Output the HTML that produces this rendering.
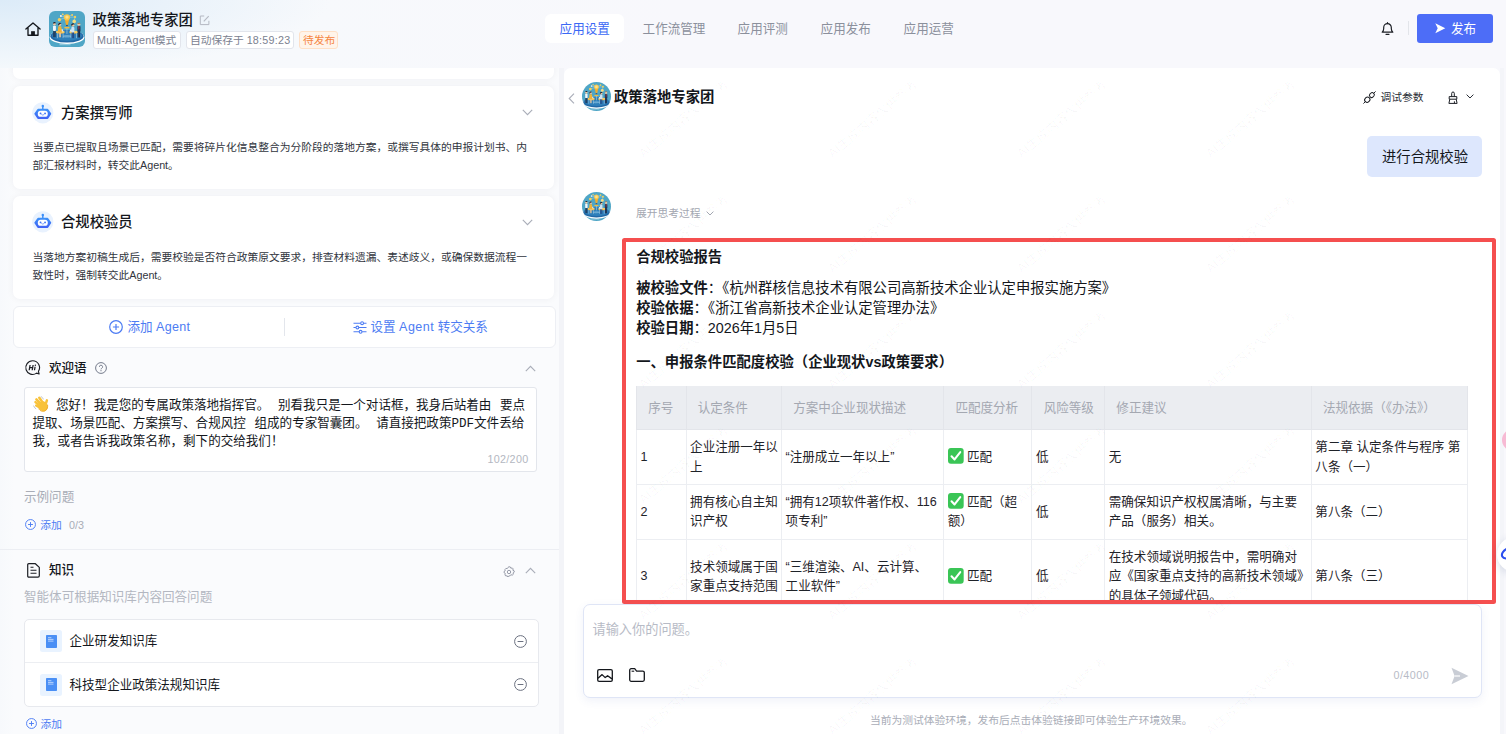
<!DOCTYPE html>
<html lang="zh-CN">
<head>
<meta charset="utf-8">
<title>政策落地专家团</title>
<style>
*{box-sizing:border-box;margin:0;padding:0}
html,body{width:1506px;height:734px;overflow:hidden}
body{position:relative;background:#f7f8fc;font-family:"Liberation Sans","Noto Sans CJK SC",sans-serif;color:#1f2329;-webkit-font-smoothing:antialiased}
.abs{position:absolute}
.t{position:absolute;white-space:nowrap;line-height:20px}
.f10{font-size:10.76px}
.f12{font-size:12.55px}
.f14{font-size:14.34px}
.b{font-weight:700}
.m{font-weight:500}
.gray{color:#a9adb7}
.blue{color:#4d7cf3}
svg{position:absolute;overflow:visible}
#bg{left:0;top:0;width:1506px;height:734px;background:
 radial-gradient(ellipse 330px 72px at 0 0,#dcebf8 0%,rgba(220,235,248,0) 100%),
 linear-gradient(90deg,#f5f9fc 0,#f7f9fc 20%,#f8f8fc 45%,#f8f8fc 100%)}
#lbg{left:0;top:68px;width:564px;height:666px;background:linear-gradient(90deg,#f7f9fc 0,#fafbfd 14px,#fafbfd 100%)}
.card{position:absolute;left:13px;width:541px;background:#fff;border-radius:7px;box-shadow:0 0 7px rgba(20,30,60,.055)}
.tag{position:absolute;top:30.5px;height:18px;line-height:16.5px;font-size:10.76px;border:1px solid #e2e5ec;border-radius:3px;background:#fff;color:#7b8190;padding:0 3.4px;white-space:nowrap}
.tab{position:absolute;top:15px;height:29px;line-height:29px;font-size:12.55px;color:#8b909c;white-space:nowrap}
#right{left:564px;top:68px;width:936px;height:666px;background:#fff;border-radius:7px 7px 0 0;overflow:hidden}
.wm{position:absolute;white-space:nowrap;font-size:12.55px;color:rgba(20,20,40,.036);transform:translate(-50%,-50%) rotate(-40deg);line-height:16px}
table{border-collapse:collapse;table-layout:fixed;position:absolute;left:72px;top:318.5px;width:832px;font-size:12.55px;line-height:19.7px;color:#1f2329}
th{background:#ebedf1;color:#a4a8b1;font-weight:400;text-align:left;height:43.5px;padding:2.4px 0 0 11.2px;border:1px solid #e3e5ea;border-top:none}
td{padding:7.9px 3px 6.6px 3.6px;border:1px solid #eceef2;vertical-align:middle}
</style>
</head>
<body>
<div id="bg" class="abs"></div>
<div id="lbg" class="abs"></div>

<!-- ===== HEADER ===== -->
<div id="header">
<!-- home -->
<svg style="left:25px;top:22.300px" width="16" height="14" viewBox="0 0 16 14"><path d="M.9 7 8 .9 15.100 7M3 5.600v7.600h10V5.600" fill="none" stroke="#15181d" stroke-width="1.350" stroke-linejoin="round" stroke-linecap="round"/><rect x="6.100" y="9.200" width="3.800" height="4" fill="#15181d"/></svg>
<!-- app icon -->
<svg style="left:49px;top:11px" width="36" height="36" viewBox="0 0 36 36">
<defs><clipPath id="ac"><rect width="36" height="36" rx="6"/></clipPath></defs>
<g clip-path="url(#ac)">
<rect width="36" height="36" fill="#4fa6c6"/>
<ellipse cx="18" cy="26.200" rx="17.300" ry="6.900" fill="#fff"/>
<ellipse cx="18" cy="25.300" rx="16.600" ry="6.300" fill="#2268a6"/>
<ellipse cx="18" cy="24.600" rx="15" ry="5.200" fill="#2e7fba"/>
<ellipse cx="18" cy="25.200" rx="4" ry="1.300" fill="#8fc4e2" opacity=".6"/>
<path d="M10.500 33.700h11" stroke="#cfe6f1" stroke-width=".6"/>
<g stroke="#e6f2f8" stroke-width=".35" fill="none"><path d="M17.900 6.300 10.400 8.700M17.900 6.300 11.900 5.100M17.900 6.300 13.700 3.300M17.900 6.300 23.100 3.900M17.900 6.300 26 6M26 6 25.200 10.400"/></g>
<circle cx="10.400" cy="8.700" r="1.700" fill="#f6cf5a"/><circle cx="11.900" cy="5.100" r="1" fill="#eef5f9"/><circle cx="13.700" cy="3.300" r=".9" fill="#f6cf5a"/><circle cx="23.100" cy="3.900" r="1" fill="#f6cf5a"/><circle cx="26" cy="6" r="1.200" fill="#f6cf5a"/><circle cx="25.200" cy="10.400" r="1.800" fill="#f8dc7e"/>
<path d="M15.800 8.300 17 13.900h1.900L20.100 8.300z" fill="#f2ab2d"/>
<circle cx="17.950" cy="6.300" r="3.100" fill="#f9c748"/><circle cx="17.950" cy="6.100" r="1.700" fill="#fde08a"/>
<rect x="17" y="13.900" width="1.900" height="1.300" fill="#2a4f7c"/>
<ellipse cx="17.950" cy="16.700" rx="2.800" ry=".85" fill="#f3b93c"/>
<rect x="17.600" y="17.300" width=".7" height="5.500" fill="#a9cfe4"/>
<!-- tables -->
<g fill="#cfe3ee"><rect x="8.300" y="21.500" width=".5" height="5.600"/><rect x="13.800" y="21.500" width=".5" height="5.600"/><rect x="21.700" y="21.500" width=".5" height="5.600"/><rect x="27.200" y="21.500" width=".5" height="5.600"/></g>
<ellipse cx="11.300" cy="21.300" rx="4.300" ry="1.350" fill="#efb23c"/><ellipse cx="11.300" cy="20.900" rx="4.300" ry="1.200" fill="#f8cd62"/>
<ellipse cx="24.700" cy="21.300" rx="4.300" ry="1.350" fill="#efb23c"/><ellipse cx="24.700" cy="20.900" rx="4.300" ry="1.200" fill="#f8cd62"/>
<path d="M10.600 18.300h3.200l.5 2.200h-3.200z" fill="#dfe9f6"/><path d="M21.200 18.500h3.200l-.4 2.100h-3.200z" fill="#dfe9f6"/>
<!-- people -->
<rect x="4.300" y="19.500" width="1.100" height="6.700" fill="#1c2b47"/><rect x="5.500" y="19.500" width="1.100" height="6.700" fill="#1c2b47"/>
<rect x="4" y="14.700" width="2.900" height="5.300" rx=".9" fill="#f3f6fa"/><circle cx="5.400" cy="13" r="1.450" fill="#f0c9a6"/><path d="M3.900 12.700a1.500 1.500 0 0 1 3-.300l-.6-.1-2 .2z" fill="#1a2233"/>
<rect x="9.900" y="20.500" width=".9" height="5.800" fill="#e9c39c"/><rect x="11" y="20.500" width=".9" height="5.800" fill="#e9c39c"/>
<path d="M9.300 15.300h3l.7 6.200H8.700z" fill="#f0b23a"/><circle cx="10.800" cy="13.500" r="1.450" fill="#f0c9a6"/><path d="M9.200 14.200a1.650 1.650 0 0 1 3.200-1.300l-1.400-.2-1 1.500z" fill="#1a2233"/>
<rect x="22.700" y="21" width="1.100" height="6.200" fill="#244a86"/><rect x="24" y="21" width="1.100" height="6.200" fill="#244a86"/>
<rect x="22.300" y="16" width="3.100" height="5.400" rx=".9" fill="#cfe2f4"/><circle cx="23.900" cy="14.300" r="1.450" fill="#f0c9a6"/><path d="M22.300 14.700a1.650 1.650 0 0 1 3.200-1.200l-1.600.1-.9 1.100z" fill="#1a2233"/>
<rect x="28.700" y="20" width="1.100" height="6.500" fill="#1c2b47"/><rect x="30" y="20" width="1.100" height="6.500" fill="#1c2b47"/>
<rect x="28.300" y="14.900" width="3.200" height="5.700" rx=".9" fill="#22345a"/><path d="M29.500 15h.8l-.1 3.200-.3.400-.3-.4z" fill="#d8463a"/><circle cx="29.900" cy="13.200" r="1.450" fill="#f0c9a6"/><path d="M28.400 13a1.550 1.550 0 0 1 3-.300l-1-.2-1.600.2z" fill="#7a4a2a"/>
</g></svg>
<div class="t m" style="left:92.5px;top:9.5px;font-size:14.34px;line-height:20px;color:#14171c">政策落地专家团</div>
<!-- edit icon -->
<svg style="left:199px;top:14.5px" width="11" height="11" viewBox="0 0 11 11"><path d="M5.2 1H1.3v8.6h8.6V5.8" fill="none" stroke="#b4b8c2" stroke-width="1"/><path d="M4.8 6.3 9.7 1.2" fill="none" stroke="#b4b8c2" stroke-width="1.1"/></svg>
<div class="tag" style="left:92.5px;width:88px"><span style="letter-spacing:.32px">Multi-Agent</span>模式</div>
<div class="tag" style="left:185.5px;width:108.5px">自动保存于 <span style="letter-spacing:.25px">18:59:23</span></div>
<div class="tag" style="left:298.5px;width:39.5px;color:#f5853f;background:#fff4ea;border-color:#ffe0c6">待发布</div>
<!-- tabs -->
<div class="abs" style="left:545px;top:14px;width:79px;height:29px;background:#fff;border-radius:6px"></div>
<div class="tab" style="left:559.6px;color:#3b68f5">应用设置</div>
<div class="tab" style="left:642.6px">工作流管理</div>
<div class="tab" style="left:737.6px">应用评测</div>
<div class="tab" style="left:820.6px">应用发布</div>
<div class="tab" style="left:903.6px">应用运营</div>
<!-- bell -->
<svg style="left:1381px;top:21.5px" width="13" height="14" viewBox="0 0 13 14"><path d="M1.2 10.2h10.6c-1.1-.9-1.5-1.9-1.5-3.6V5.4a3.8 3.8 0 0 0-7.6 0v1.2c0 1.700-.4 2.7-1.500 3.600z" fill="none" stroke="#1c1f25" stroke-width="1.2" stroke-linejoin="round"/><path d="M5 12.300h3M6.500 .6v1" stroke="#1c1f25" stroke-width="1.2" stroke-linecap="round"/></svg>
<div class="abs" style="left:1408px;top:21px;width:1px;height:14px;background:#e3e5ea"></div>
<!-- publish -->
<div class="abs" style="left:1417px;top:14px;width:76px;height:29px;background:#4d6df7;border-radius:3px"></div>
<svg style="left:1435px;top:23.2px" width="10.5" height="10.5" viewBox="0 0 10.5 10.5"><path d="M.3.2 10.300 5.250.3 10.300 2.700 5.250z" fill="#fff"/></svg>
<div class="t f12" style="left:1451px;top:18.5px;color:#fff;line-height:20px">发布</div>
</div>

<!-- ===== LEFT PANEL ===== -->
<div id="left" class="abs" style="left:0;top:0;width:564px;height:734px;clip-path:inset(68px 0 0 0)">
<div class="abs" style="left:558.500px;top:68px;width:5.500px;height:666px;background:#f3f4f8"></div>
<div class="card" style="top:40px;height:39px"></div>
<!-- card 2 -->
<div class="card" style="top:86px;height:103px"></div>
<svg style="left:32.2px;top:101.8px" width="21.600" height="21.600" viewBox="0 0 22 22"><circle cx="11" cy="11" r="10.800" fill="#e9f2fe"/><defs><linearGradient id="rg" x1="0" y1="0" x2="0" y2="1"><stop offset="0" stop-color="#3c8ff8"/><stop offset="1" stop-color="#4064f5"/></linearGradient></defs><path d="M11 4.200v3" stroke="#3c8ff8" stroke-width="1.500" stroke-linecap="round"/><circle cx="11" cy="4" r="1.250" fill="#3c8ff8"/><path d="M3.300 11.900 6.200 7.900h9.600l2.900 4-2.900 4.400H6.200z" fill="url(#rg)" stroke="url(#rg)" stroke-width="1.800" stroke-linejoin="round"/><rect x="5.900" y="9" width="10.200" height="6.100" rx="3" fill="#fff"/><circle cx="8.700" cy="11.600" r=".95" fill="#3f74f6"/><circle cx="13.300" cy="11.600" r=".95" fill="#3f74f6"/><path d="M9.900 13q1.100.9 2.200 0" fill="none" stroke="#3f74f6" stroke-width=".7" stroke-linecap="round"/></svg>
<div class="t m f14" style="left:61px;top:103px;color:#14171c">方案撰写师</div>
<svg style="left:522px;top:109px" width="11" height="7" viewBox="0 0 11 7"><path d="M.8.900 5.500 5.700 10.200.9" fill="none" stroke="#a9adb8" stroke-width="1.100"/></svg>
<div class="t f10" style="left:32.500px;top:138px;line-height:18px;color:#31353d;white-space:normal;width:500px">当要点已提取且场景已匹配，需要将碎片化信息整合为分阶段的落地方案，或撰写具体的申报计划书、内部汇报材料时，转交此Agent。</div>
<!-- card 3 -->
<div class="card" style="top:195.500px;height:103.500px"></div>
<svg style="left:32.2px;top:211.3px" width="21.600" height="21.600" viewBox="0 0 22 22"><circle cx="11" cy="11" r="10.800" fill="#e9f2fe"/><defs><linearGradient id="rg" x1="0" y1="0" x2="0" y2="1"><stop offset="0" stop-color="#3c8ff8"/><stop offset="1" stop-color="#4064f5"/></linearGradient></defs><path d="M11 4.200v3" stroke="#3c8ff8" stroke-width="1.500" stroke-linecap="round"/><circle cx="11" cy="4" r="1.250" fill="#3c8ff8"/><path d="M3.300 11.900 6.200 7.900h9.600l2.900 4-2.900 4.400H6.200z" fill="url(#rg)" stroke="url(#rg)" stroke-width="1.800" stroke-linejoin="round"/><rect x="5.900" y="9" width="10.200" height="6.100" rx="3" fill="#fff"/><circle cx="8.700" cy="11.600" r=".95" fill="#3f74f6"/><circle cx="13.300" cy="11.600" r=".95" fill="#3f74f6"/><path d="M9.900 13q1.100.9 2.200 0" fill="none" stroke="#3f74f6" stroke-width=".7" stroke-linecap="round"/></svg>
<div class="t m f14" style="left:61px;top:212px;color:#14171c">合规校验员</div>
<svg style="left:522px;top:218.5px" width="11" height="7" viewBox="0 0 11 7"><path d="M.8.900 5.500 5.700 10.200.9" fill="none" stroke="#a9adb8" stroke-width="1.100"/></svg>
<div class="t f10" style="left:32.500px;top:248px;line-height:18px;color:#31353d;white-space:normal;width:500px">当落地方案初稿生成后，需要校验是否符合政策原文要求，排查材料遗漏、表述歧义，或确保数据流程一致性时，强制转交此Agent。</div>
<!-- button row -->
<div class="abs" style="left:13px;top:306px;width:542.500px;height:41.500px;background:#fff;border:1px solid #edeff4;border-radius:6px"></div>
<svg style="left:109px;top:320px" width="14" height="14" viewBox="0 0 14 14"><circle cx="7" cy="7" r="6.300" fill="none" stroke="#4d7cf3" stroke-width="1.200"/><path d="M7 3.900v6.200M3.900 7h6.200" stroke="#4d7cf3" stroke-width="1.200"/></svg>
<div class="t f12 blue" style="left:127.500px;top:317px">添加 <span style="letter-spacing:.3px">Agent</span></div>
<div class="abs" style="left:284px;top:318px;width:1px;height:18px;background:#e3e6ec"></div>
<svg style="left:352.500px;top:320.500px" width="14" height="13" viewBox="0 0 14 13"><path d="M.5 2.200h7.200M10.600 2.200h2.900M.5 6.500h2.400M5.800 6.500h7.700M.5 10.800h5.700M9.100 10.800h4.400" stroke="#4d7cf3" stroke-width="1.100"/><circle cx="9.100" cy="2.200" r="1.400" fill="none" stroke="#4d7cf3" stroke-width="1.100"/><circle cx="4.400" cy="6.500" r="1.400" fill="none" stroke="#4d7cf3" stroke-width="1.100"/><circle cx="7.600" cy="10.800" r="1.400" fill="none" stroke="#4d7cf3" stroke-width="1.100"/></svg>
<div class="t f12 blue" style="left:370.500px;top:317px">设置 <span style="letter-spacing:.45px">Agent</span> 转交关系</div>
<!-- welcome -->
<svg style="left:25.400px;top:360.200px" width="15.200" height="15.200" viewBox="0 0 14 14"><path d="M7 .7a6.300 6.300 0 1 0 3.700 11.400l2.300.8-.6-2.500A6.300 6.300 0 0 0 7 .7z" fill="none" stroke="#1c1f25" stroke-width="1.050" stroke-linejoin="round"/><g transform="skewX(-10) translate(1.300 0)"><path d="M4.200 4.600v4.800M7 4.600v4.800M4.200 7h2.800M9.100 6.300v3.100" stroke="#1c1f25" stroke-width="1.150"/><circle cx="9.100" cy="4.900" r=".65" fill="#1c1f25"/></g></svg>
<div class="t m f12" style="left:49px;top:357.500px;color:#14171c">欢迎语</div>
<svg style="left:94.500px;top:362px" width="12" height="12" viewBox="0 0 12 12"><circle cx="6" cy="6" r="5.400" fill="none" stroke="#757b8c" stroke-width="1"/><path d="M4.400 4.800a1.600 1.600 0 1 1 2.300 1.450c-.5.300-.7.550-.7 1.100" fill="none" stroke="#757b8c" stroke-width="1"/><circle cx="6" cy="8.700" r=".6" fill="#757b8c"/></svg>
<svg style="left:524.5px;top:364.5px" width="11" height="7" viewBox="0 0 11 7"><path d="M.8 6.100 5.500 1.300 10.200 6.100" fill="none" stroke="#a9adb8" stroke-width="1.100"/></svg>
<div class="abs" style="left:24px;top:387px;width:513px;height:84.500px;background:#fff;border:1px solid #e3e6ec;border-radius:3px"></div>
<svg aria-label="👋" style="left:32.500px;top:396px" width="16" height="16" viewBox="0 0 16 16"><g stroke="#f8c23a" stroke-width="2.500" stroke-linecap="round" fill="none"><path d="M6.300 1.700 10 7"/><path d="M3.400 3.300 8.500 8.600"/><path d="M2.500 6.100 7.600 10.300"/><path d="M3.200 9.500 7 11.800"/><path d="M13.900 4.400 12.500 8.600"/></g><ellipse cx="10" cy="10.300" rx="4.700" ry="5.200" transform="rotate(-38 10 10.300)" fill="#f8c23a"/><path d="M5.800 12.700c1.300 2.500 4.200 3.400 6.400 2 2-1.300 2.700-3.600 2.400-6" fill="none" stroke="#eea928" stroke-width=".9"/><path d="M8.200.700c1 .4 1.700 1.300 2 2.300M.7 10c.4 1.200 1.100 2.100 2.100 2.700" fill="none" stroke="#b5bac4" stroke-width=".9" stroke-linecap="round"/></svg>
<div class="t f12" style="left:32.500px;top:397.700px;width:500px;line-height:17.930px;word-spacing:1.2px;white-space:pre-wrap;color:#14171c;font-family:'Liberation Mono','Noto Sans CJK SC',monospace"><span style="display:inline-block;width:23.500px"></span>您好！我是您的专属政策落地指挥官。 别看我只是一个对话框，我身后站着由 要点
提取、场景匹配、方案撰写、合规风控 组成的专家智囊团。 请直接把政策PDF文件丢给
我，或者告诉我政策名称，剩下的交给我们！</div>
<div class="t f10" style="left:487.500px;top:448.500px;color:#b3b7c1;letter-spacing:.3px">102/200</div>
<div class="t f12" style="left:24px;top:486.500px;color:#a9adb7">示例问题</div>
<svg style="left:24.8px;top:519px" width="11" height="11" viewBox="0 0 14 14"><circle cx="7" cy="7" r="6.300" fill="none" stroke="#4d7cf3" stroke-width="1.200"/><path d="M7 3.900v6.200M3.900 7h6.200" stroke="#4d7cf3" stroke-width="1.200"/></svg>
<div class="t f10 blue" style="left:40.200px;top:514.500px">添加</div>
<div class="t f10" style="left:69px;top:514.500px;color:#a9adb7">0/3</div>
<div class="abs" style="left:0;top:548.500px;width:559px;height:1px;background:#eceef3"></div>
<!-- knowledge -->
<svg style="left:26.500px;top:563px" width="13" height="15" viewBox="0 0 13 15"><path d="M1.700.7h6.700l3.900 3.700v8.400a1.300 1.300 0 0 1-1.300 1.300H1.700A1 1 0 0 1 .7 13V1.700a1 1 0 0 1 1-1z" fill="none" stroke="#1c1f25" stroke-width="1.200" stroke-linejoin="round"/><path d="M3.500 4.300h3M3.500 7.300h6M3.500 10.300h6" stroke="#1c1f25" stroke-width="1.100"/></svg>
<div class="t m f12" style="left:49px;top:559.500px;color:#14171c">知识</div>
<svg style="left:502.500px;top:565.500px" width="12" height="12" viewBox="0 0 12 12"><path d="M6 .7 7.400 1l.5 1.300 1.300-.4 1 1-.4 1.300 1.300.6.200 1.300-1.200.8.200 1.400-1.100.9-1.300-.5-.8 1.100-1.400.2L4.900 11l-.7-1.200-1.400.2-.9-1.100.5-1.300L1.200 6.900 1 5.500l1.200-.7L2 3.400l.9-1 1.400.2L5 1.400z" fill="none" stroke="#8d92a0" stroke-width=".9" stroke-linejoin="round"/><circle cx="6" cy="6" r="1.700" fill="none" stroke="#8d92a0" stroke-width=".9"/></svg>
<svg style="left:524.8px;top:567px" width="11" height="7" viewBox="0 0 11 7"><path d="M.8 6.100 5.500 1.300 10.200 6.100" fill="none" stroke="#a9adb8" stroke-width="1.100"/></svg>
<div class="t f12" style="left:24px;top:586.500px;color:#b3b7c1">智能体可根据知识库内容回答问题</div>
<div class="abs" style="left:24px;top:619px;width:514.500px;height:87.500px;background:#fff;border:1px solid #e7e9ee;border-radius:5px"></div>
<div class="abs" style="left:25px;top:662px;width:512.500px;height:1px;background:#eceef2"></div>
<div class="abs" style="left:39.800px;top:630px;width:22px;height:22px;background:#e9f3ff;border-radius:2.500px"></div><svg style="left:45.500px;top:634.8px" width="11" height="13" viewBox="0 0 11 13"><path d="M0 .8a.8.800 0 0 1 .8-.8h9.400a.8.800 0 0 1 .8.800v11.400a.8.800 0 0 1-.8.800H.8a.8.800 0 0 1-.8-.8z" fill="#4a8ff5"/><path d="M2 2.700h3.400M2 4.400h5.500M2 6.100h5.500" stroke="#e3eeff" stroke-width=".7"/></svg>
<div class="t f12" style="left:69.500px;top:630.500px;color:#14171c">企业研发知识库</div>
<svg style="left:513.7px;top:634.7px" width="13" height="13" viewBox="0 0 13 13"><circle cx="6.500" cy="6.500" r="5.900" fill="none" stroke="#6b7180" stroke-width="1"/><path d="M3.600 6.500h5.800" stroke="#6b7180" stroke-width="1"/></svg>
<div class="abs" style="left:39.800px;top:673.5px;width:22px;height:22px;background:#e9f3ff;border-radius:2.500px"></div><svg style="left:45.500px;top:678.3px" width="11" height="13" viewBox="0 0 11 13"><path d="M0 .8a.8.800 0 0 1 .8-.8h9.400a.8.800 0 0 1 .8.800v11.400a.8.800 0 0 1-.8.800H.8a.8.800 0 0 1-.8-.8z" fill="#4a8ff5"/><path d="M2 2.700h3.400M2 4.400h5.500M2 6.100h5.500" stroke="#e3eeff" stroke-width=".7"/></svg>
<div class="t f12" style="left:69.500px;top:674.500px;color:#14171c">科技型企业政策法规知识库</div>
<svg style="left:513.7px;top:677.8px" width="13" height="13" viewBox="0 0 13 13"><circle cx="6.500" cy="6.500" r="5.900" fill="none" stroke="#6b7180" stroke-width="1"/><path d="M3.600 6.500h5.800" stroke="#6b7180" stroke-width="1"/></svg>
<svg style="left:25.8px;top:717.8px" width="11" height="11" viewBox="0 0 14 14"><circle cx="7" cy="7" r="6.300" fill="none" stroke="#4d7cf3" stroke-width="1.200"/><path d="M7 3.900v6.200M3.900 7h6.200" stroke="#4d7cf3" stroke-width="1.200"/></svg>
<div class="t f10 blue" style="left:40.600px;top:713.500px">添加</div>
</div>

<!-- ===== RIGHT PANEL ===== -->
<div id="right" class="abs"></div>
<div id="rc" class="abs" style="left:0;top:0;width:1506px;height:734px;clip-path:inset(68px 6px 0 564px)">
<!-- chat header -->
<svg style="left:568px;top:92.500px" width="7" height="11" viewBox="0 0 7 11"><path d="M6 .7 1.200 5.500 6 10.300" fill="none" stroke="#a9adb8" stroke-width="1.100"/></svg>
<svg style="left:581.8px;top:82px" width="29" height="29" viewBox="0 0 36 36"><defs><clipPath id="av1"><circle cx="18" cy="18" r="18"/></clipPath></defs><g clip-path="url(#av1)"><rect width="36" height="36" fill="#4fa6c6"/><ellipse cx="18" cy="26.200" rx="17.300" ry="6.900" fill="#fff"/><ellipse cx="18" cy="25.300" rx="16.600" ry="6.300" fill="#2268a6"/><ellipse cx="18" cy="24.600" rx="15" ry="5.200" fill="#2e7fba"/><ellipse cx="18" cy="25.200" rx="4" ry="1.300" fill="#8fc4e2" opacity=".6"/><path d="M10.500 33.700h11" stroke="#cfe6f1" stroke-width=".6"/><g stroke="#e6f2f8" stroke-width=".35" fill="none"><path d="M17.900 6.300 10.400 8.700M17.900 6.300 11.900 5.100M17.900 6.300 13.700 3.300M17.900 6.300 23.100 3.900M17.900 6.300 26 6M26 6 25.200 10.400"/></g><circle cx="10.400" cy="8.700" r="1.700" fill="#f6cf5a"/><circle cx="11.900" cy="5.100" r="1" fill="#eef5f9"/><circle cx="13.700" cy="3.300" r=".9" fill="#f6cf5a"/><circle cx="23.100" cy="3.900" r="1" fill="#f6cf5a"/><circle cx="26" cy="6" r="1.200" fill="#f6cf5a"/><circle cx="25.200" cy="10.400" r="1.800" fill="#f8dc7e"/><path d="M15.800 8.300 17 13.900h1.900L20.100 8.300z" fill="#f2ab2d"/><circle cx="17.950" cy="6.300" r="3.100" fill="#f9c748"/><circle cx="17.950" cy="6.100" r="1.700" fill="#fde08a"/><rect x="17" y="13.900" width="1.900" height="1.300" fill="#2a4f7c"/><ellipse cx="17.950" cy="16.700" rx="2.800" ry=".85" fill="#f3b93c"/><rect x="17.600" y="17.300" width=".7" height="5.500" fill="#a9cfe4"/><!-- tables --><g fill="#cfe3ee"><rect x="8.300" y="21.500" width=".5" height="5.600"/><rect x="13.800" y="21.500" width=".5" height="5.600"/><rect x="21.700" y="21.500" width=".5" height="5.600"/><rect x="27.200" y="21.500" width=".5" height="5.600"/></g><ellipse cx="11.300" cy="21.300" rx="4.300" ry="1.350" fill="#efb23c"/><ellipse cx="11.300" cy="20.900" rx="4.300" ry="1.200" fill="#f8cd62"/><ellipse cx="24.700" cy="21.300" rx="4.300" ry="1.350" fill="#efb23c"/><ellipse cx="24.700" cy="20.900" rx="4.300" ry="1.200" fill="#f8cd62"/><path d="M10.600 18.300h3.200l.5 2.200h-3.200z" fill="#dfe9f6"/><path d="M21.200 18.500h3.200l-.4 2.100h-3.200z" fill="#dfe9f6"/><!-- people --><rect x="4.300" y="19.500" width="1.100" height="6.700" fill="#1c2b47"/><rect x="5.500" y="19.500" width="1.100" height="6.700" fill="#1c2b47"/><rect x="4" y="14.700" width="2.900" height="5.300" rx=".9" fill="#f3f6fa"/><circle cx="5.400" cy="13" r="1.450" fill="#f0c9a6"/><path d="M3.900 12.700a1.500 1.500 0 0 1 3-.300l-.6-.1-2 .2z" fill="#1a2233"/><rect x="9.900" y="20.500" width=".9" height="5.800" fill="#e9c39c"/><rect x="11" y="20.500" width=".9" height="5.800" fill="#e9c39c"/><path d="M9.300 15.300h3l.7 6.200H8.700z" fill="#f0b23a"/><circle cx="10.800" cy="13.500" r="1.450" fill="#f0c9a6"/><path d="M9.200 14.200a1.650 1.650 0 0 1 3.200-1.300l-1.400-.2-1 1.500z" fill="#1a2233"/><rect x="22.700" y="21" width="1.100" height="6.200" fill="#244a86"/><rect x="24" y="21" width="1.100" height="6.200" fill="#244a86"/><rect x="22.300" y="16" width="3.100" height="5.400" rx=".9" fill="#cfe2f4"/><circle cx="23.900" cy="14.300" r="1.450" fill="#f0c9a6"/><path d="M22.300 14.700a1.650 1.650 0 0 1 3.200-1.200l-1.600.1-.9 1.100z" fill="#1a2233"/><rect x="28.700" y="20" width="1.100" height="6.500" fill="#1c2b47"/><rect x="30" y="20" width="1.100" height="6.500" fill="#1c2b47"/><rect x="28.300" y="14.900" width="3.200" height="5.700" rx=".9" fill="#22345a"/><path d="M29.500 15h.8l-.1 3.200-.3.400-.3-.4z" fill="#d8463a"/><circle cx="29.900" cy="13.200" r="1.450" fill="#f0c9a6"/><path d="M28.400 13a1.550 1.550 0 0 1 3-.300l-1-.2-1.600.2z" fill="#7a4a2a"/></g></svg>
<div class="t b f14" style="left:614px;top:87px;color:#14171c">政策落地专家团</div>
<svg style="left:1363px;top:91px" width="13" height="13" viewBox="0 0 13 13"><path d="M.7 12.300 2.400 10.600M10.700 2.300 12.300.7" stroke="#1c1f25" stroke-width="1" stroke-linecap="round"/><rect x="-2.400" y="-2.700" width="4.800" height="5.400" rx="2.300" transform="translate(4.300 8.700) rotate(45)" fill="none" stroke="#1c1f25" stroke-width="1"/><rect x="-2.100" y="-2.500" width="4.200" height="5" rx="2" transform="translate(8.900 4.100) rotate(45)" fill="none" stroke="#1c1f25" stroke-width="1"/></svg>
<div class="t f10" style="left:1380.500px;top:87px;color:#2a2e36">调试参数</div>
<svg style="left:1448px;top:91.500px" width="10" height="12" viewBox="0 0 10 12"><path d="M3.700 4.600V1.300a1.300 1.300 0 0 1 2.600 0v3.300M1.200 4.600h7.600v2.600H1.200zM1.800 7.200.9 11.400h8.200l-.9-4.200M6.400 11.400V9.300" fill="none" stroke="#1c1f25" stroke-width="1" stroke-linejoin="round"/></svg>
<svg style="left:1465.500px;top:94px" width="8" height="5" viewBox="0 0 8 5"><path d="M.6.600 4 4 7.400.6" fill="none" stroke="#2a2e36" stroke-width="1"/></svg>
<!-- user bubble -->
<div class="abs" style="left:1367px;top:136px;width:115px;height:41px;background:#dde7fd;border-radius:5px"></div>
<div class="t f14" style="left:1382px;top:147px;color:#14171c">进行合规校验</div>
<!-- bot -->
<svg style="left:581.8px;top:191.5px" width="29" height="29" viewBox="0 0 36 36"><defs><clipPath id="av2"><circle cx="18" cy="18" r="18"/></clipPath></defs><g clip-path="url(#av2)"><rect width="36" height="36" fill="#4fa6c6"/><ellipse cx="18" cy="26.200" rx="17.300" ry="6.900" fill="#fff"/><ellipse cx="18" cy="25.300" rx="16.600" ry="6.300" fill="#2268a6"/><ellipse cx="18" cy="24.600" rx="15" ry="5.200" fill="#2e7fba"/><ellipse cx="18" cy="25.200" rx="4" ry="1.300" fill="#8fc4e2" opacity=".6"/><path d="M10.500 33.700h11" stroke="#cfe6f1" stroke-width=".6"/><g stroke="#e6f2f8" stroke-width=".35" fill="none"><path d="M17.900 6.300 10.400 8.700M17.900 6.300 11.900 5.100M17.900 6.300 13.700 3.300M17.900 6.300 23.100 3.900M17.900 6.300 26 6M26 6 25.200 10.400"/></g><circle cx="10.400" cy="8.700" r="1.700" fill="#f6cf5a"/><circle cx="11.900" cy="5.100" r="1" fill="#eef5f9"/><circle cx="13.700" cy="3.300" r=".9" fill="#f6cf5a"/><circle cx="23.100" cy="3.900" r="1" fill="#f6cf5a"/><circle cx="26" cy="6" r="1.200" fill="#f6cf5a"/><circle cx="25.200" cy="10.400" r="1.800" fill="#f8dc7e"/><path d="M15.800 8.300 17 13.900h1.900L20.100 8.300z" fill="#f2ab2d"/><circle cx="17.950" cy="6.300" r="3.100" fill="#f9c748"/><circle cx="17.950" cy="6.100" r="1.700" fill="#fde08a"/><rect x="17" y="13.900" width="1.900" height="1.300" fill="#2a4f7c"/><ellipse cx="17.950" cy="16.700" rx="2.800" ry=".85" fill="#f3b93c"/><rect x="17.600" y="17.300" width=".7" height="5.500" fill="#a9cfe4"/><!-- tables --><g fill="#cfe3ee"><rect x="8.300" y="21.500" width=".5" height="5.600"/><rect x="13.800" y="21.500" width=".5" height="5.600"/><rect x="21.700" y="21.500" width=".5" height="5.600"/><rect x="27.200" y="21.500" width=".5" height="5.600"/></g><ellipse cx="11.300" cy="21.300" rx="4.300" ry="1.350" fill="#efb23c"/><ellipse cx="11.300" cy="20.900" rx="4.300" ry="1.200" fill="#f8cd62"/><ellipse cx="24.700" cy="21.300" rx="4.300" ry="1.350" fill="#efb23c"/><ellipse cx="24.700" cy="20.900" rx="4.300" ry="1.200" fill="#f8cd62"/><path d="M10.600 18.300h3.200l.5 2.200h-3.200z" fill="#dfe9f6"/><path d="M21.200 18.500h3.200l-.4 2.100h-3.200z" fill="#dfe9f6"/><!-- people --><rect x="4.300" y="19.500" width="1.100" height="6.700" fill="#1c2b47"/><rect x="5.500" y="19.500" width="1.100" height="6.700" fill="#1c2b47"/><rect x="4" y="14.700" width="2.900" height="5.300" rx=".9" fill="#f3f6fa"/><circle cx="5.400" cy="13" r="1.450" fill="#f0c9a6"/><path d="M3.900 12.700a1.500 1.500 0 0 1 3-.300l-.6-.1-2 .2z" fill="#1a2233"/><rect x="9.900" y="20.500" width=".9" height="5.800" fill="#e9c39c"/><rect x="11" y="20.500" width=".9" height="5.800" fill="#e9c39c"/><path d="M9.300 15.300h3l.7 6.200H8.700z" fill="#f0b23a"/><circle cx="10.800" cy="13.500" r="1.450" fill="#f0c9a6"/><path d="M9.200 14.200a1.650 1.650 0 0 1 3.200-1.300l-1.400-.2-1 1.500z" fill="#1a2233"/><rect x="22.700" y="21" width="1.100" height="6.200" fill="#244a86"/><rect x="24" y="21" width="1.100" height="6.200" fill="#244a86"/><rect x="22.300" y="16" width="3.100" height="5.400" rx=".9" fill="#cfe2f4"/><circle cx="23.900" cy="14.300" r="1.450" fill="#f0c9a6"/><path d="M22.300 14.700a1.650 1.650 0 0 1 3.200-1.200l-1.600.1-.9 1.100z" fill="#1a2233"/><rect x="28.700" y="20" width="1.100" height="6.500" fill="#1c2b47"/><rect x="30" y="20" width="1.100" height="6.500" fill="#1c2b47"/><rect x="28.300" y="14.900" width="3.200" height="5.700" rx=".9" fill="#22345a"/><path d="M29.500 15h.8l-.1 3.200-.3.400-.3-.4z" fill="#d8463a"/><circle cx="29.900" cy="13.200" r="1.450" fill="#f0c9a6"/><path d="M28.400 13a1.550 1.550 0 0 1 3-.300l-1-.2-1.600.2z" fill="#7a4a2a"/></g></svg>
<div class="t f10" style="left:636px;top:203px;color:#a3a7b1">展开思考过程</div>
<svg style="left:705.500px;top:211px" width="8" height="5" viewBox="0 0 8 5"><path d="M.6.600 4 4 7.400.6" fill="none" stroke="#a3a7b1" stroke-width="1"/></svg>
<!-- report -->
<div id="report" class="abs" style="left:626px;top:242px;width:866px;height:357.800px;overflow:hidden">
<div class="abs" style="left:-626px;top:-242px;width:1506px;height:734px">
<div class="t b f14" style="left:636.200px;top:247px;color:#14171c">合规校验报告</div>
<div class="t f14" style="left:636.200px;top:278px;line-height:20.080px;color:#14171c;white-space:normal;width:840px"><span class="b">被校验文件</span>：《杭州群核信息技术有限公司高新技术企业认定申报实施方案》<br><span class="b">校验依据</span>：《浙江省高新技术企业认定管理办法》<br><span class="b">校验日期</span>：2026年1月5日</div>
<div class="t b f14" style="left:636.200px;top:352px;color:#14171c">一、申报条件匹配度校验（企业现状vs政策要求）</div>
<table style="left:636px;top:386px">
<colgroup><col style="width:49.500px"><col style="width:95.500px"><col style="width:162.200px"><col style="width:88.300px"><col style="width:72.700px"><col style="width:206.600px"><col style="width:156.700px"></colgroup>
<tr><th>序号</th><th>认定条件</th><th>方案中企业现状描述</th><th>匹配度分析</th><th>风险等级</th><th>修正建议</th><th>法规依据（《办法》）</th></tr>
<tr><td>1</td><td>企业注册一年以上</td><td>“注册成立一年以上”</td><td><svg aria-label="✅" style="position:relative;display:inline-block;vertical-align:-3.200px;margin-right:3.500px" width="15.700" height="15.700" viewBox="0 0 16 16"><rect width="16" height="16" rx="3" fill="#3ac556"/><path d="M3.600 8.400 6.700 11.700 12.500 4.200" fill="none" stroke="#fff" stroke-width="2.100" stroke-linecap="round" stroke-linejoin="round"/></svg>匹配</td><td>低</td><td>无</td><td>第二章 认定条件与程序 第八条（一）</td></tr>
<tr><td>2</td><td>拥有核心自主知识产权</td><td>“拥有12项软件著作权、116项专利”</td><td><svg aria-label="✅" style="position:relative;display:inline-block;vertical-align:-3.200px;margin-right:3.500px" width="15.700" height="15.700" viewBox="0 0 16 16"><rect width="16" height="16" rx="3" fill="#3ac556"/><path d="M3.600 8.400 6.700 11.700 12.500 4.200" fill="none" stroke="#fff" stroke-width="2.100" stroke-linecap="round" stroke-linejoin="round"/></svg>匹配（超额）</td><td>低</td><td>需确保知识产权权属清晰，与主要产品（服务）相关。</td><td>第八条（二）</td></tr>
<tr><td>3</td><td>技术领域属于国家重点支持范围</td><td>“三维渲染、AI、云计算、<br>工业软件”</td><td><svg aria-label="✅" style="position:relative;display:inline-block;vertical-align:-3.200px;margin-right:3.500px" width="15.700" height="15.700" viewBox="0 0 16 16"><rect width="16" height="16" rx="3" fill="#3ac556"/><path d="M3.600 8.400 6.700 11.700 12.500 4.200" fill="none" stroke="#fff" stroke-width="2.100" stroke-linecap="round" stroke-linejoin="round"/></svg>匹配</td><td>低</td><td>在技术领域说明报告中，需明确对应《国家重点支持的高新技术领域》的具体子领域代码。</td><td>第八条（三）</td></tr>
</table>
</div></div>
<!-- red highlight -->
<div class="abs" style="left:621.600px;top:237.900px;width:874.300px;height:365.800px;border:4.300px solid #f54f4f;border-radius:2.500px"></div>
<!-- input -->
<div class="abs" style="left:582.500px;top:604.300px;width:899px;height:93.400px;background:#fff;border:1px solid #dfe5f6;border-radius:7px;box-shadow:0 3px 10px rgba(60,90,180,.08)"></div>
<div class="t" style="left:592.500px;top:620px;font-size:13.2px;color:#b7bbc6">请输入你的问题。</div>
<svg style="left:597px;top:668.500px" width="16" height="13" viewBox="0 0 16 13"><rect x=".7" y=".7" width="14.600" height="11.600" rx="1.400" fill="none" stroke="#14171c" stroke-width="1.300"/><path d="M1 9.300 5.100 5.600 8.200 8.600 10.600 6.700 15 9.900" fill="none" stroke="#14171c" stroke-width="1.300" stroke-linejoin="round"/></svg>
<svg style="left:628.800px;top:667.800px" width="16" height="14" viewBox="0 0 16 14"><path d="M.7 2.200A1.500 1.500 0 0 1 2.200.7h3.500l1.900 2.400h6.200a1.500 1.500 0 0 1 1.500 1.500v7.200a1.500 1.500 0 0 1-1.500 1.500H2.200a1.500 1.500 0 0 1-1.500-1.500z" fill="none" stroke="#14171c" stroke-width="1.300" stroke-linejoin="round"/><path d="M2.600 3.200h2.600" stroke="#14171c" stroke-width="1.100"/></svg>
<div class="t f10" style="left:1393.500px;top:665px;color:#b7bbc6;letter-spacing:.45px">0/4000</div>
<svg style="left:1451px;top:666.500px" width="18" height="18" viewBox="0 0 18 18"><path d="M.5.800 17.500 9 .5 17.200 3.600 9z" fill="#c9cdd5"/><path d="M3.600 9H9" stroke="#fff" stroke-width="1.200"/></svg>
<div class="t f10" style="left:870px;top:709.500px;color:#a9adb7">当前为测试体验环境，发布后点击体验链接即可体验生产环境效果。</div>
<div id="wms" style="pointer-events:none"><div class="wm" style="left:683.8px;top:118.8px">AI生成内容仅供参考</div><div class="wm" style="left:873px;top:118.8px">AI生成内容仅供参考</div><div class="wm" style="left:1062.2px;top:118.8px">AI生成内容仅供参考</div><div class="wm" style="left:1251.4px;top:118.8px">AI生成内容仅供参考</div><div class="wm" style="left:683.8px;top:234.3px">AI生成内容仅供参考</div><div class="wm" style="left:873px;top:234.3px">AI生成内容仅供参考</div><div class="wm" style="left:1062.2px;top:234.3px">AI生成内容仅供参考</div><div class="wm" style="left:1251.4px;top:234.3px">AI生成内容仅供参考</div><div class="wm" style="left:683.8px;top:349.8px">AI生成内容仅供参考</div><div class="wm" style="left:873px;top:349.8px">AI生成内容仅供参考</div><div class="wm" style="left:1062.2px;top:349.8px">AI生成内容仅供参考</div><div class="wm" style="left:1251.4px;top:349.8px">AI生成内容仅供参考</div><div class="wm" style="left:683.8px;top:465.3px">AI生成内容仅供参考</div><div class="wm" style="left:873px;top:465.3px">AI生成内容仅供参考</div><div class="wm" style="left:1062.2px;top:465.3px">AI生成内容仅供参考</div><div class="wm" style="left:1251.4px;top:465.3px">AI生成内容仅供参考</div><div class="wm" style="left:683.8px;top:580.8px">AI生成内容仅供参考</div><div class="wm" style="left:873px;top:580.8px">AI生成内容仅供参考</div><div class="wm" style="left:1062.2px;top:580.8px">AI生成内容仅供参考</div><div class="wm" style="left:1251.4px;top:580.8px">AI生成内容仅供参考</div><div class="wm" style="left:683.8px;top:696.3px">AI生成内容仅供参考</div><div class="wm" style="left:873px;top:696.3px">AI生成内容仅供参考</div><div class="wm" style="left:1062.2px;top:696.3px">AI生成内容仅供参考</div><div class="wm" style="left:1251.4px;top:696.3px">AI生成内容仅供参考</div></div>
</div>
<!-- floating buttons -->
<div class="abs" style="left:1500px;top:68px;width:4px;height:666px;background:#f4f5f9"></div>
<div class="abs" style="left:1501.800px;top:429.400px;width:22px;height:22px;border-radius:50%;background:#f7bad4"></div>
<div class="abs" style="left:1497.400px;top:536.800px;width:35px;height:35px;border-radius:50%;background:#fff;box-shadow:0 2px 8px rgba(40,60,120,.16)"></div>
<svg style="left:1500px;top:544.500px" width="16" height="16" viewBox="0 0 16 16"><ellipse cx="9" cy="8" rx="7.600" ry="4.800" transform="rotate(-28 9 8)" fill="none" stroke="#2b4ff0" stroke-width="2.100"/></svg>

</body>
</html>
